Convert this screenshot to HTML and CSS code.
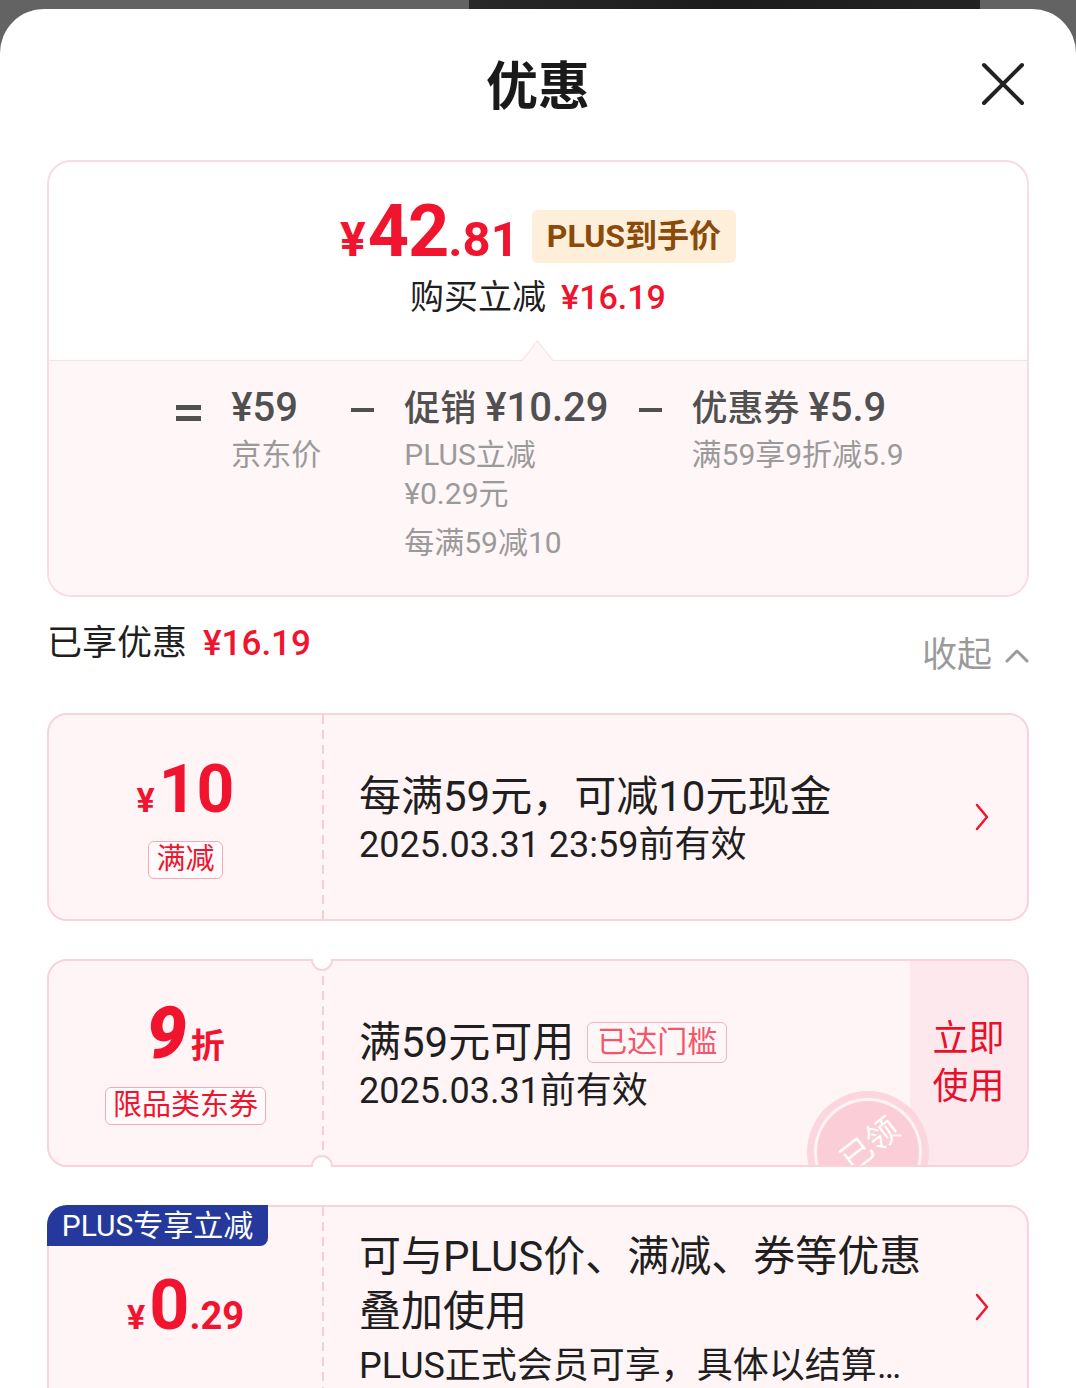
FILE: index.html
```html
<!DOCTYPE html>
<html lang="zh-CN">
<head>
<meta charset="utf-8">
<title>优惠</title>
<link rel="stylesheet" href="styles.css">
</head>
<body>
<div class="backdrop"><div class="photo"></div></div>
<div class="sheet">
  <header class="sheet-head">
    <span></span>
    <h1 class="sheet-title">优惠</h1>
    <button class="close" aria-label="关闭">
      <svg width="44" height="44" viewBox="0 0 44 44"><path d="M3 3 L41 41 M41 3 L3 41" stroke="#222" stroke-width="4" stroke-linecap="round" fill="none"/></svg>
    </button>
  </header>

  <section class="summary">
    <div class="summary-top">
      <div class="final-price">
        <span class="fp-num"><span class="fp-yen">¥</span><span class="fp-int">42</span><span class="fp-dec">.81</span></span>
        <span class="fp-badge">PLUS到手价</span>
      </div>
      <div class="save-line">购买立减<span class="red">¥16.19</span></div>
    </div>
    <div class="summary-bottom">
      <div class="formula">
        <span class="op op-eq"></span>
        <div class="term">
          <div class="term-main"><span class="num">¥59</span></div>
          <div class="term-sub">京东价</div>
        </div>
        <span class="op op-minus"></span>
        <div class="term">
          <div class="term-main">促销 <span class="num">¥10.29</span></div>
          <div class="term-sub">PLUS立减<br>¥0.29元</div>
          <div class="term-sub extra">每满59减10</div>
        </div>
        <span class="op op-minus"></span>
        <div class="term">
          <div class="term-main">优惠券 <span class="num">¥5.9</span></div>
          <div class="term-sub">满59享9折减5.9</div>
        </div>
      </div>
    </div>
  </section>

  <div class="savings">
    <div class="savings-label">已享优惠<span class="red">¥16.19</span></div>
    <div class="collapse">收起
      <svg width="24" height="14" viewBox="0 0 24 14"><path d="M2 12 L12 2 L22 12" stroke="#9a9a9a" stroke-width="3" fill="none" stroke-linecap="round" stroke-linejoin="round"/></svg>
    </div>
  </div>

  <div class="coupons">
    <div class="coupon">
      <div class="cp-left">
        <div class="amount"><span class="yen">¥</span><span class="big">10</span></div>
        <span class="tag">满减</span>
      </div>
      <div class="perf"></div>
      <div class="cp-main">
        <div class="cp-title">每满59元，可减10元现金</div>
        <div class="cp-date">2025.03.31 23:59前有效</div>
      </div>
      <div class="cp-arrow">
        <svg width="14" height="28" viewBox="0 0 14 28"><path d="M2 2 L12 14 L2 26" stroke="#f0142e" stroke-width="2.5" fill="none" stroke-linecap="round" stroke-linejoin="round"/></svg>
      </div>
    </div>

    <div class="coupon coupon-notched">
      <span class="notch notch-top"></span>
      <span class="notch notch-bottom"></span>
      <div class="stamp-clip"><div class="stamp"><span>已领</span></div></div>
      <div class="cp-left">
        <div class="discount"><span class="big">9</span><span class="unit">折</span></div>
        <span class="tag">限品类东券</span>
      </div>
      <div class="perf"></div>
      <div class="cp-main">
        <div class="cp-title">满59元可用<span class="tag-met">已达门槛</span></div>
        <div class="cp-date">2025.03.31前有效</div>
      </div>
      <div class="cp-use">立即<br>使用</div>
    </div>

    <div class="coupon coupon-plus">
      <span class="plus-badge">PLUS专享立减</span>
      <div class="cp-left">
        <div class="amount"><span class="yen">¥</span><span class="big">0</span><span class="dec">.29</span></div>
      </div>
      <div class="perf"></div>
      <div class="cp-main">
        <div class="cp-title wide">可与PLUS价、满减、券等优惠<br>叠加使用</div>
        <div class="cp-desc">PLUS正式会员可享，具体以结算页为准</div>
      </div>
      <div class="cp-arrow">
        <svg width="14" height="28" viewBox="0 0 14 28"><path d="M2 2 L12 14 L2 26" stroke="#f0142e" stroke-width="2.5" fill="none" stroke-linecap="round" stroke-linejoin="round"/></svg>
      </div>
    </div>
  </div>
</div>
</body>
</html>
```

FILE: styles.css
```css
* { box-sizing: border-box; margin: 0; padding: 0; }
html, body { width: 1076px; height: 1388px; overflow: hidden; }
body {
  background: #636363;
  font-family: Roboto, "Noto Sans CJK SC", sans-serif;
  color: #1f1f1f;
}
.red { color: #f0142e; }

.backdrop { height: 9px; display: flex; }
.photo {
  margin-left: 469px;
  width: 511px;
  height: 9px;
  background: linear-gradient(90deg, #282828, #1c1c1c 50%, #232323);
}

.sheet {
  background: #fff;
  border-radius: 44px 44px 0 0;
  height: 1379px;
  padding: 0 47px;
}

.sheet-head {
  height: 151px;
  display: grid;
  grid-template-columns: 1fr auto 1fr;
  align-items: start;
}
.sheet-title {
  margin-top: 53px;
  font-size: 52px;
  line-height: 52px;
  font-weight: 700;
  color: #1a1a1a;
}
.close {
  justify-self: end;
  margin-top: 53px;
  margin-right: 4px;
  width: 44px;
  height: 44px;
  border: 0;
  background: none;
}
.close svg { display: block; }

/* summary card */
.summary {
  border: 2px solid #f9dbe2;
  border-radius: 24px;
  overflow: hidden;
}
.summary-top {
  height: 198px;
  padding-top: 38px;
  display: flex;
  flex-direction: column;
  align-items: center;
}
.final-price { display: flex; align-items: center; height: 72px; }
.fp-num {
  display: flex;
  align-items: baseline;
  color: #f0142e;
  font-weight: 700;
  line-height: 72px;
}
.fp-yen { font-size: 48px; margin-right: 2px; }
.fp-int { font-size: 72px; letter-spacing: -1px; }
.fp-dec { font-size: 49px; }
.fp-badge {
  margin-left: 13px;
  height: 53px;
  padding: 0 15px;
  background: #fdefd9;
  border-radius: 6px;
  color: #8b4a0a;
  font-size: 32px;
  font-weight: 700;
  line-height: 53px;
}
.save-line { margin-top: 5px; font-size: 34px; line-height: 40px; color: #1f1f1f; }
.save-line .red { margin-left: 15px; font-weight: 500; }

.summary-bottom {
  position: relative;
  height: 235px;
  background: #fff6f8;
  border-top: 1px solid #fbdfe6;
  padding-top: 25px;
}
.summary-bottom::before {
  content: "";
  position: absolute;
  left: 50%;
  top: -12px;
  width: 22px;
  height: 22px;
  margin-left: -12px;
  background: #fff6f8;
  border-top: 1px solid #fbdfe6;
  border-left: 1px solid #fbdfe6;
  transform: scaleY(1.25) rotate(45deg);
}
.formula {
  display: flex;
  justify-content: center;
  align-items: flex-start;
  gap: 30px;
  padding-left: 4px;
}
.op-eq {
  width: 25px;
  height: 16px;
  border-top: 5px solid #505050;
  border-bottom: 5px solid #505050;
  margin-top: 19px;
}
.op-minus {
  width: 23px;
  height: 4px;
  background: #505050;
  margin-top: 22px;
}
.term-main {
  font-size: 36px;
  line-height: 44px;
  color: #505050;
  font-weight: 500;
  white-space: nowrap;
}
.term-main .num { font-size: 40px; }
.term-sub {
  margin-top: 4px;
  font-size: 30px;
  line-height: 39px;
  color: #9a9a9a;
  white-space: nowrap;
}
.term-sub.extra { margin-top: 10px; }

/* savings row */
.savings {
  display: flex;
  justify-content: space-between;
  align-items: flex-start;
  height: 40px;
  margin-top: 27px;
}
.savings-label { font-size: 35px; line-height: 40px; color: #1f1f1f; }
.savings-label .red { margin-left: 16px; font-weight: 500; }
.collapse {
  margin-top: 12px;
  display: flex;
  align-items: center;
  gap: 13px;
  font-size: 35px;
  line-height: 40px;
  color: #9a9a9a;
}

/* coupons */
.coupons {
  margin-top: 49px;
  display: flex;
  flex-direction: column;
  gap: 38px;
}
.coupon {
  position: relative;
  display: flex;
  height: 208px;
  border: 2px solid #f8d3dc;
  border-radius: 20px;
  background: #fff5f7;
}
.coupon-plus { height: 240px; }

.cp-left {
  width: 273px;
  display: flex;
  flex-direction: column;
  align-items: center;
  justify-content: center;
}
.perf {
  width: 2px;
  background: repeating-linear-gradient(to bottom, #f7ccd6 0 9px, transparent 9px 15px);
}
.cp-main {
  flex: 1;
  padding-left: 35px;
  padding-top: 5px;
  display: flex;
  flex-direction: column;
  justify-content: center;
}
.cp-title {
  display: flex;
  align-items: center;
  font-size: 42px;
  line-height: 50px;
  color: #1f1f1f;
}
.cp-date { font-size: 36px; line-height: 46px; color: #1f1f1f; }
.cp-arrow {
  display: flex;
  align-items: center;
  padding-right: 38px;
}
.cp-arrow svg { display: block; }

.amount {
  display: flex;
  align-items: baseline;
  color: #f0142e;
  font-weight: 700;
  line-height: 70px;
}
.amount .yen { font-size: 34px; margin-right: 4px; }
.amount .big { font-size: 66px; }
.amount .dec { font-size: 38px; }

.tag {
  margin-top: 6px;
  height: 38px;
  padding: 0 7px;
  border: 1.5px solid #f6a9b8;
  border-radius: 6px;
  background: #fffafb;
  font-size: 29px;
  line-height: 35px;
  color: #f0142e;
}

.discount {
  display: flex;
  align-items: baseline;
  color: #f0142e;
  font-weight: 900;
  line-height: 66px;
}
.discount .big { font-size: 72px; font-style: italic; margin-right: 4px; }
.discount .unit { font-size: 34px; font-weight: 700; }
.coupon-notched .tag { margin-top: 8px; }

.tag-met {
  margin-left: 13px;
  height: 41px;
  padding: 0 9px;
  border: 1.5px solid #f6b3c0;
  border-radius: 6px;
  background: #fff6f8;
  font-size: 30px;
  line-height: 38px;
  color: #f2566a;
}

.cp-use {
  width: 117px;
  display: flex;
  align-items: center;
  justify-content: center;
  background: #fde8ee;
  border-radius: 0 18px 18px 0;
  font-size: 36px;
  line-height: 48px;
  color: #e8112c;
  text-align: center;
}

.notch {
  position: absolute;
  left: 262px;
  width: 22px;
  height: 12px;
  background: #fff;
  border: 2px solid #f8d3dc;
  z-index: 2;
}
.notch-top { top: -2px; border-top: 0; border-radius: 0 0 12px 12px; }
.notch-bottom { bottom: -2px; border-bottom: 0; border-radius: 12px 12px 0 0; }

.stamp-clip {
  position: absolute;
  inset: 0;
  overflow: hidden;
  border-radius: 18px;
  pointer-events: none;
}
.stamp {
  position: absolute;
  left: 758px;
  top: 130px;
  width: 122px;
  height: 122px;
  border-radius: 50%;
  background: #fbd6de;
  display: flex;
  align-items: center;
  justify-content: center;
}
.stamp::before {
  content: "";
  position: absolute;
  inset: 7px;
  border-radius: 50%;
  border: 3px solid rgba(255, 255, 255, 0.75);
  background: #fbcdd7;
}
.stamp span {
  position: relative;
  font-size: 32px;
  color: #fff;
  transform: rotate(-38deg);
  margin-top: -20px;
}

.plus-badge {
  position: absolute;
  left: -2px;
  top: -2px;
  width: 221px;
  height: 41px;
  background: #24399b;
  color: #fff;
  font-size: 30px;
  line-height: 41px;
  text-align: center;
  border-radius: 20px 0 8px 0;
  z-index: 2;
}
.coupon-plus .cp-left { justify-content: flex-start; padding-top: 60px; }
.coupon-plus .amount { line-height: 76px; }
.coupon-plus .amount .big { font-size: 70px; }
.coupon-plus .cp-main { justify-content: flex-start; padding-top: 22px; }
.cp-title.wide { display: block; line-height: 55px; }
.cp-desc {
  max-width: 553px;
  margin-top: 2px;
  font-size: 36px;
  line-height: 50px;
  white-space: nowrap;
  overflow: hidden;
  text-overflow: ellipsis;
  color: #1f1f1f;
}
.coupon-plus .cp-arrow { align-items: flex-start; padding-top: 86px; }
```
